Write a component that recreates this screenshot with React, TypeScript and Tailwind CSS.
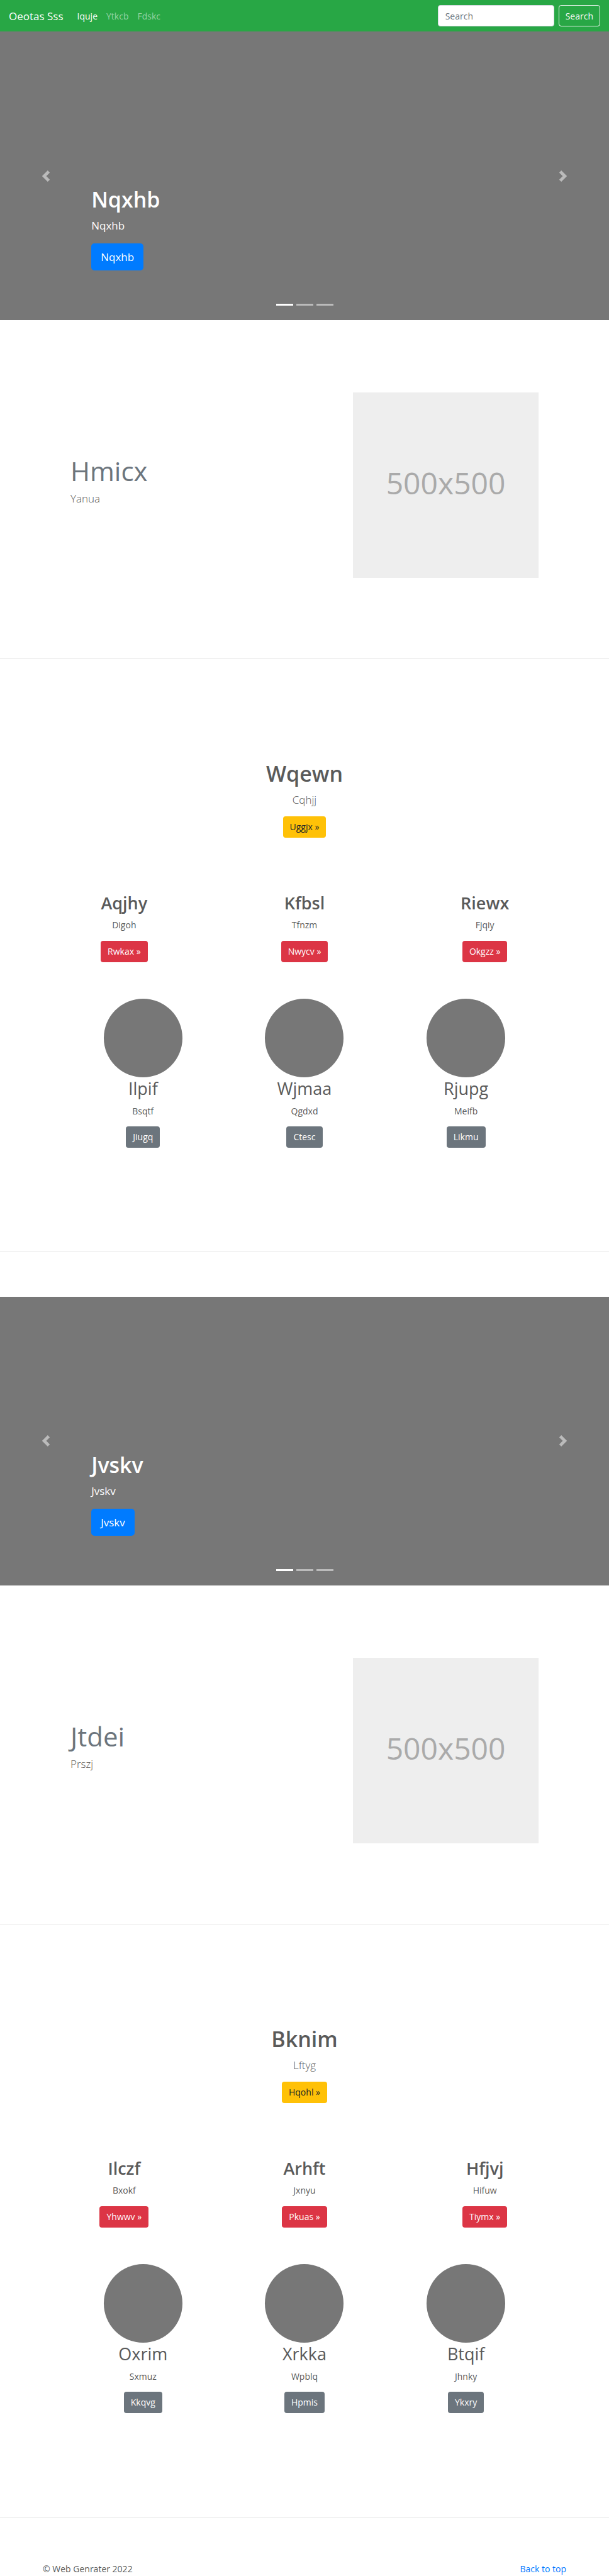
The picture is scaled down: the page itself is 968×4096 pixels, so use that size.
import type { ReactNode } from "react";

type Item = { title: string; text: string; action: string };

type BlockContent = {
  id: string;
  hero: string;
  feature: { title: string; text: string };
  lead: Item;
  columns: Item[];
  people: Item[];
};

const blocks: BlockContent[] = [
  {
    id: "first",
    hero: "Nqxhb",
    feature: { title: "Hmicx", text: "Yanua" },
    lead: { title: "Wqewn", text: "Cqhjj", action: "Uggjx »" },
    columns: [
      { title: "Aqjhy", text: "Digoh", action: "Rwkax »" },
      { title: "Kfbsl", text: "Tfnzm", action: "Nwycv »" },
      { title: "Riewx", text: "Fjqiy", action: "Okgzz »" },
    ],
    people: [
      { title: "Ilpif", text: "Bsqtf", action: "Jiugq" },
      { title: "Wjmaa", text: "Qgdxd", action: "Ctesc" },
      { title: "Rjupg", text: "Meifb", action: "Likmu" },
    ],
  },
  {
    id: "second",
    hero: "Jvskv",
    feature: { title: "Jtdei", text: "Prszj" },
    lead: { title: "Bknim", text: "Lftyg", action: "Hqohl »" },
    columns: [
      { title: "Ilczf", text: "Bxokf", action: "Yhwwv »" },
      { title: "Arhft", text: "Jxnyu", action: "Pkuas »" },
      { title: "Hfjvj", text: "Hifuw", action: "Tiymx »" },
    ],
    people: [
      { title: "Oxrim", text: "Sxmuz", action: "Kkqvg" },
      { title: "Xrkka", text: "Wpblq", action: "Hpmis" },
      { title: "Btqif", text: "Jhnky", action: "Ykxry" },
    ],
  },
];

const tones = {
  yellow: "bg-[#ffc107] text-[#212529]",
  red: "bg-[#dc3545] text-white",
  gray: "bg-[#6c757d] text-white",
};

function Button({ tone, children }: { tone: keyof typeof tones; children: ReactNode }) {
  return (
    <a
      href="#"
      className={`inline-flex h-[34px] items-center rounded px-[11px] text-[14px] leading-[21px] ${tones[tone]}`}
    >
      {children}
    </a>
  );
}

function Navbar() {
  return (
    <header className="flex h-[50px] items-center bg-[#28a745] px-[14px]">
      <a href="#" className="mr-[22px] text-[17px] leading-[27px] text-white">
        Oeotas Sss
      </a>
      <nav className="flex gap-[14px] text-[14px] leading-[21px] text-white/50">
        <a href="#" className="text-white">
          Iquje
        </a>
        <a href="#">Ytkcb</a>
        <a href="#">Fdskc</a>
      </nav>
      <form className="ml-auto flex gap-[7px]" onSubmit={(e) => e.preventDefault()}>
        <input
          type="search"
          aria-label="Search"
          placeholder="Search"
          className="h-[34px] w-[185px] rounded border border-[#ced4da] bg-white px-[11px] text-[14px] leading-[21px] text-[#495057] placeholder:text-[#6c757d]"
        />
        <button
          type="submit"
          className="h-[34px] rounded border border-[#f8f9fa] px-[10px] text-[14px] leading-[21px] text-[#f8f9fa]"
        >
          Search
        </button>
      </form>
    </header>
  );
}

function Arrow({ label, path }: { label: string; path: string }) {
  return (
    <button type="button" aria-label={label} className="flex w-[15%] items-center justify-center text-white opacity-50">
      <svg viewBox="0 0 8 8" className="size-[18px]" fill="currentColor">
        <path d={path} />
      </svg>
    </button>
  );
}

function Hero({ text }: { text: string }) {
  return (
    <section className="relative flex h-[459px] bg-[#777] text-white">
      <Arrow label="Previous" path="M5.25 0l-4 4 4 4 1.5-1.5L4.25 4l2.5-2.5L5.25 0z" />
      <div className="flex flex-1 flex-col items-start justify-end pb-[79px]">
        <h1 className="mb-[6px] text-[34px] leading-[43px] font-semibold">{text}</h1>
        <p className="mb-[15px] text-[17px] leading-[27px]">{text}</p>
        <a
          href="#"
          className="flex h-[43px] items-center rounded-[5px] bg-[#007bff] px-[15px] text-[17px] leading-[27px]"
        >
          {text}
        </a>
      </div>
      <Arrow label="Next" path="M2.75 0l-1.5 1.5L3.75 4l-2.5 2.5L2.75 8l4-4-4-4z" />
      <div className="absolute inset-x-0 bottom-[23px] flex justify-center gap-[5px]">
        <span className="h-[3px] w-[27px] bg-white" />
        <span className="h-[3px] w-[27px] bg-white/50" />
        <span className="h-[3px] w-[27px] bg-white/50" />
      </div>
    </section>
  );
}

function Feature({ title, text }: { title: string; text: string }) {
  return (
    <section className="mx-auto grid max-w-[770px] grid-cols-12 pt-[115px] pb-[128px]">
      <div className="col-span-7 px-[13px]">
        <h2 className="mt-[98px] mb-[3px] text-[42px] leading-[54px] text-[#6c757d]">{title}</h2>
        <p className="text-[17px] leading-[27px] font-light">{text}</p>
      </div>
      <div className="col-span-5 px-[13px]">
        <div className="flex aspect-square items-center justify-center bg-[#eee] pb-[6px] text-[48px] leading-[60px] text-[#aaa]">
          500x500
        </div>
      </div>
    </section>
  );
}

function Block({ content }: { content: BlockContent }) {
  return (
    <>
      <Hero text={content.hero} />
      <Feature title={content.feature.title} text={content.feature.text} />
      <hr className="border-[#e5e5e5]" />
      <section className="pt-[161px] pb-[165px] text-center">
        <h2 className="mb-[6px] text-[34px] leading-[43px] font-semibold">{content.lead.title}</h2>
        <p className="mb-[13px] text-[17px] leading-[27px] font-light">{content.lead.text}</p>
        <Button tone="yellow">{content.lead.action}</Button>
        <div className="mx-auto mt-[87px] grid max-w-[860px] grid-cols-3">
          {content.columns.map((item) => (
            <div key={item.title} className="flex flex-col items-center">
              <h3 className="mb-[7px] text-[27px] leading-[34px] font-semibold">{item.title}</h3>
              <p className="mb-[15px] text-[14px] leading-[21px]">{item.text}</p>
              <Button tone="red">{item.action}</Button>
            </div>
          ))}
        </div>
        <div className="mx-auto mt-[58px] grid max-w-[770px] grid-cols-3">
          {content.people.map((item) => (
            <div key={item.title} className="flex flex-col items-center">
              <div className="size-[125px] rounded-full bg-[#777]" />
              <h3 className="mb-[7px] text-[27px] leading-[36px]">{item.title}</h3>
              <p className="mb-[14px] text-[14px] leading-[21px]">{item.text}</p>
              <Button tone="gray">{item.action}</Button>
            </div>
          ))}
        </div>
      </section>
      <hr className="mb-[71px] border-[#e5e5e5]" />
    </>
  );
}

export default function App() {
  return (
    <div className="bg-white font-['Open_Sans','Noto_Sans',sans-serif] text-[#5a5a5a]">
      <Navbar />
      <main>
        {blocks.map((content) => (
          <Block key={content.id} content={content} />
        ))}
      </main>
      <footer className="flex justify-between px-[68px] pb-[3px] text-[14px] leading-[21px]">
        <p>© Web Genrater 2022</p>
        <a href="#" className="text-[#007bff]">
          Back to top
        </a>
      </footer>
    </div>
  );
}
